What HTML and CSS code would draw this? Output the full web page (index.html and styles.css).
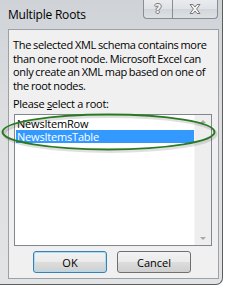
FILE: index.html
```html
<!DOCTYPE html>
<html>
<head>
<meta charset="utf-8">
<link rel="stylesheet" href="styles.css">
</head>
<body>
<div class="window">
  <div class="titlebar">
    <span class="title">Multiple Roots</span>
    <div class="caption-btns">
      <div class="cbtn help">?</div>
      <div class="cbtn close">
        <svg width="12" height="10" viewBox="0 0 12 10"><path d="M1 0.5 L4 0.5 L6 3 L8 0.5 L11 0.5 L7.6 5 L11 9.5 L8 9.5 L6 7 L4 9.5 L1 9.5 L4.4 5 Z" fill="#f4f4f4" stroke="#7a7a7a" stroke-width="1" stroke-linejoin="round"/></svg>
      </div>
    </div>
  </div>
  <div class="client">
    <p class="msg">The selected XML schema contains more than one root node. Microsoft Excel can only create an XML map based on one of the root nodes.</p>
    <p class="label">Please <u>s</u>elect a root:</p>
    <div class="listbox">
      <div class="items">
        <div class="item">NewsItemRow</div>
        <div class="item sel">NewsItemsTable</div>
      </div>
      <div class="scrollbar">
        <span class="arrow up"></span>
        <span class="arrow down"></span>
      </div>
    </div>
    <div class="buttons">
      <button class="btn default">OK</button>
      <button class="btn">Cancel</button>
    </div>
  </div>
  <svg class="ring" width="226" height="60" viewBox="0 0 226 60">
    <ellipse cx="110" cy="33" rx="106" ry="17.5" fill="none" stroke="#000" stroke-opacity="0.12" stroke-width="3"/>
    <ellipse cx="108.5" cy="31" rx="106" ry="17.5" fill="none" stroke="#2a7a22" stroke-width="2"/>
  </svg>
</div>
</body>
</html>
```
FILE: styles.css
```css
html, body {
  margin: 0;
  padding: 0;
  background: #ffffff;
}
body {
  width: 226px;
  height: 288px;
  overflow: hidden;
  font-family: "Open Sans", "Noto Sans", sans-serif;
}
.window {
  position: relative;
  box-sizing: border-box;
  width: 223px;
  height: 285px;
  background: linear-gradient(#cfd3d8, #dcdee0 40%, #e2e3e4);
  border-right: 1px solid #5e5e5e;
  border-bottom: 1px solid #5e5e5e;
  border-bottom-right-radius: 7px;
  padding: 0 3px 5px 8px;
  display: flex;
  flex-direction: column;
}
.titlebar {
  height: 29px;
  flex: none;
  display: flex;
  justify-content: space-between;
  align-items: flex-start;
}
.title {
  font-size: 12px;
  line-height: 14px;
  margin-top: 8px;
  color: #000;
  letter-spacing: -0.2px;
}
.caption-btns {
  display: flex;
  margin-right: 1px;
}
.cbtn {
  box-sizing: border-box;
  height: 19px;
  border: 1px solid #8a8e94;
  border-top: none;
  background: linear-gradient(#e9ebee, #dfe2e6 50%, #d2d6db 51%, #dde0e4);
  display: flex;
  align-items: center;
  justify-content: center;
}
.help {
  width: 29px;
  border-right: none;
  border-bottom-left-radius: 4px;
  font-family: "DejaVu Sans", sans-serif;
  font-weight: bold;
  font-size: 12px;
  color: #f2f2f2;
  text-shadow: 1px 0 0 #7a7a7a, -1px 0 0 #7a7a7a, 0 1px 0 #7a7a7a, 0 -1px 0 #7a7a7a;
}
.close {
  width: 46px;
  border-bottom-right-radius: 4px;
}
.client {
  flex: 1;
  box-sizing: border-box;
  background: #f0f0f0;
  border: 1px solid #9da0a4;
  padding: 8px 2px 0 4px;
  display: flex;
  flex-direction: column;
  font-size: 12px;
  color: #000;
}
.msg {
  margin: 0;
  line-height: 13.5px;
  font-size: 11px;
  letter-spacing: -0.33px;
  word-spacing: -0.5px;
}
.label {
  margin: 5px 0 0;
  line-height: 13px;
  font-size: 11px;
  letter-spacing: -0.3px;
}
.listbox {
  margin-top: 4px;
  margin-left: 1px;
  box-sizing: border-box;
  width: 198px;
  height: 132px;
  border: 1px solid #82878f;
  background: #fff;
  display: flex;
}
.items {
  flex: 1;
  padding: 2px 0 0 1px;
}
.item {
  height: 13px;
  line-height: 13px;
  font-size: 11px;
  letter-spacing: -0.2px;
  padding-left: 1px;
  white-space: nowrap;
}
.item.sel {
  background: #3399ff;
  color: #fff;
}
.scrollbar {
  width: 17px;
  background: #eeeeee;
  border-left: 1px solid #f6f6f6;
  display: flex;
  flex-direction: column;
  justify-content: space-between;
  align-items: center;
  padding: 5px 0;
  box-sizing: border-box;
}
.arrow {
  width: 0;
  height: 0;
  border-left: 3px solid transparent;
  border-right: 3px solid transparent;
}
.arrow.up {
  border-bottom: 3px solid #a8a8a8;
}
.arrow.down {
  border-top: 3px solid #a8a8a8;
}
.buttons {
  display: flex;
  gap: 10px;
  margin-top: 5px;
  padding-left: 20px;
}
.btn {
  box-sizing: border-box;
  width: 74px;
  height: 22px;
  border: 1px solid #707070;
  border-radius: 3px;
  background: linear-gradient(#f2f2f2, #ebebeb 48%, #dddddd 52%, #cfcfcf);
  font-family: "Open Sans", "Noto Sans", sans-serif;
  font-size: 11px;
  color: #000;
  padding: 0;
}
.btn.default {
  border-color: #3c7fb1;
  box-shadow: inset 0 0 0 1px #a8dcf5;
}
.ring {
  position: absolute;
  left: 0;
  top: 101px;
  pointer-events: none;
}
```
